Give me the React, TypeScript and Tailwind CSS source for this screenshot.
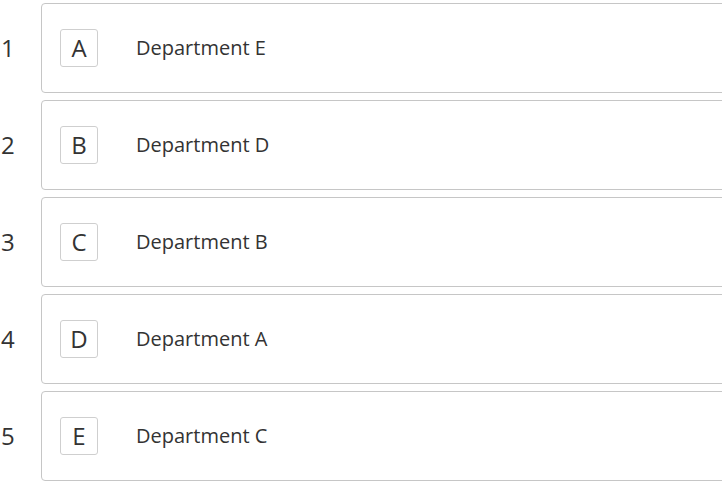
const rows = [
  { n: 1, letter: "A", name: "Department E" },
  { n: 2, letter: "B", name: "Department D" },
  { n: 3, letter: "C", name: "Department B" },
  { n: 4, letter: "D", name: "Department A" },
  { n: 5, letter: "E", name: "Department C" },
];

export default function App() {
  return (
    <main
      className="w-[722px] h-[500px] overflow-hidden bg-white pt-[3px] text-[#333]"
      style={{ fontFamily: '"Open Sans", sans-serif' }}
    >
      <ul className="flex flex-col gap-[7px]">
        {rows.map((r) => (
          <li key={r.n} className="flex items-center">
            <div className="w-[41px] shrink-0 pl-[1px] text-[24px] leading-none text-[#333]">
              {r.n}
            </div>
            <div className="flex h-[90px] w-[700px] shrink-0 items-center rounded-[4px] border border-[#c6c6c6] pl-[18px]">
              <div className="flex h-[38px] w-[38px] items-center justify-center rounded-[3px] border border-[#cfcfcf] text-[24px] leading-none">
                {r.letter}
              </div>
              <div className="ml-[38px] text-[20px] leading-none">{r.name}</div>
            </div>
          </li>
        ))}
      </ul>
    </main>
  );
}
